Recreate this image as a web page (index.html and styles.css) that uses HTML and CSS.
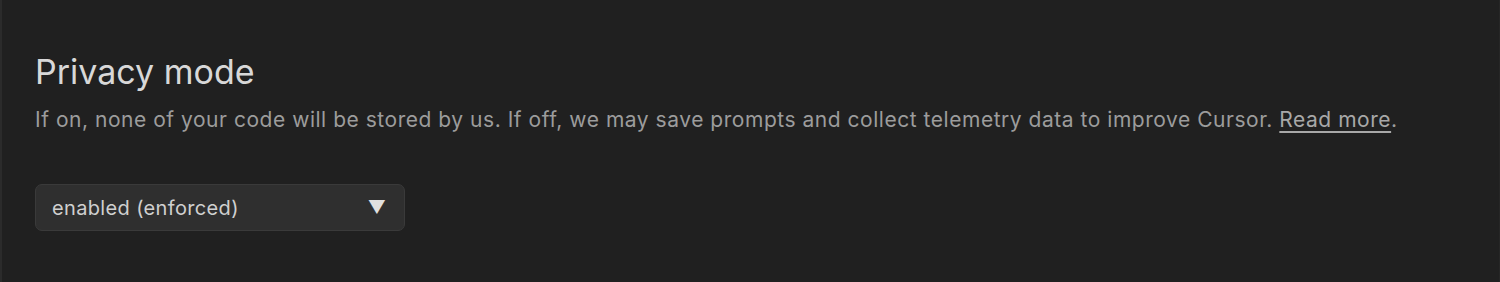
FILE: index.html
```html
<!DOCTYPE html>
<html>
<head>
<meta charset="utf-8">
<link rel="stylesheet" href="styles.css">
</head>
<body>
<div class="panel">
  <section class="setting">
    <h2 class="setting-title">Privacy mode</h2>
    <p class="setting-desc">If on, none of your code will be stored by us. If off, we may save prompts and collect telemetry data to improve Cursor. <a class="link" href="#">Read more</a>.</p>
    <div class="select">
      <span class="select-value">enabled (enforced)</span>
      <span class="select-arrow">▼</span>
    </div>
  </section>
</div>
</body>
</html>
```
FILE: styles.css
```css
html, body {
  margin: 0;
  padding: 0;
  background: #202020;
}
body {
  width: 1500px;
  height: 282px;
  overflow: hidden;
  font-family: Inter, "Noto Sans", sans-serif;
}
.panel {
  box-sizing: border-box;
  height: 282px;
  border-left: 2px solid #2b2b2b;
  border-right: 1px solid #262626;
  padding: 52px 0 0 33px;
}
.setting-title {
  margin: 0;
  font-size: 34px;
  line-height: 40px;
  font-weight: 400;
  color: #d8d8d8;
}
.setting-desc {
  margin: 16px 0 0;
  font-size: 21px;
  line-height: 24px;
  letter-spacing: 0.53px;
  color: #9c9c9c;
}
.link {
  color: #a8a8a8;
  text-decoration: underline;
  text-underline-offset: 4px;
}
.select {
  box-sizing: border-box;
  margin-top: 52px;
  width: 370px;
  height: 47px;
  display: flex;
  align-items: center;
  justify-content: space-between;
  padding: 0 18px 0 16px;
  background: #2f2f2f;
  border: 1px solid #3a3a3a;
  border-radius: 7px;
}
.select-value {
  font-size: 20px;
  letter-spacing: 0.35px;
  color: #d0d0d0;
}
.select-arrow {
  font-size: 18px;
  color: #e0e0e0;
}
```
